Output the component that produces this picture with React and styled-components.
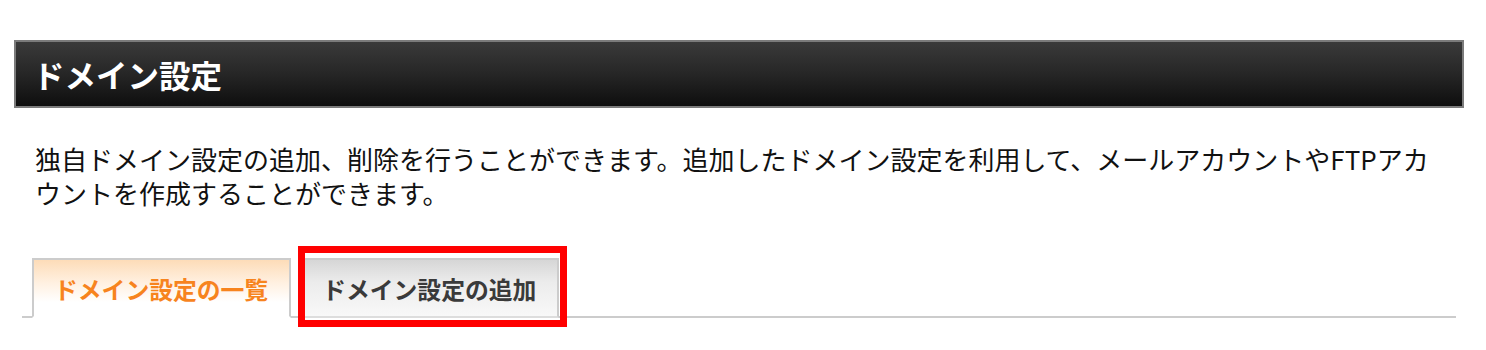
import React from 'react';
import styled, { createGlobalStyle } from 'styled-components';

const GlobalStyle = createGlobalStyle`
  body {
    margin: 0;
    background: #fff;
    font-family: "Noto Sans CJK JP", "Noto Sans", sans-serif;
  }
`;

const Page = styled.div`
  width: 1450px;
  padding: 40px 0 30px 14px;
`;

const Header = styled.h1`
  margin: 0;
  height: 64px;
  display: flex;
  align-items: center;
  padding-left: 17px;
  border: 2px solid #7b7b7b;
  background: linear-gradient(to bottom, #3a3a3a 0%, #262626 50%, #0e0e0e 100%);
  color: #fff;
  font-size: 31.5px;
  font-weight: 700;
`;

const Description = styled.p`
  margin: 34px 0 0;
  padding: 0 16px 0 21px;
  font-size: 26px;
  line-height: 34px;
  color: #111;
`;

const TabBar = styled.div`
  margin: 48px 8px 0;
  padding-left: 10px;
  display: flex;
  align-items: flex-end;
  gap: 9px;
  border-bottom: 2px solid #ccc;
`;

const Tab = styled.div`
  position: relative;
  height: 56px;
  margin-bottom: -2px;
  display: flex;
  align-items: center;
  padding: 0 21px 0 20px;
  border: 2px solid #ccc;
  border-bottom: ${(p) => (p.$active ? '2px solid #fff' : '2px solid #ddd')};
  background: ${(p) =>
    p.$active
      ? 'linear-gradient(to bottom, #fddcb8 0%, #fff0e0 40%, #ffffff 75%)'
      : 'linear-gradient(to bottom, #d6d6d6 0%, #ececec 40%, #f8f8f8 100%)'};
  color: ${(p) => (p.$active ? '#f7841e' : '#3a3a3a')};
  font-size: 23.8px;
  font-weight: 700;
  white-space: nowrap;
`;

const Highlight = styled.span`
  position: absolute;
  top: -14px;
  left: -4px;
  right: -10px;
  bottom: -11px;
  border: 7px solid #ff0000;
  pointer-events: none;
`;

export default function App() {
  return (
    <>
      <GlobalStyle />
      <Page>
        <Header>ドメイン設定</Header>
        <Description>
          独自ドメイン設定の追加、削除を行うことができます。追加したドメイン設定を利用して、メールアカウントやFTPアカウントを作成することができます。
        </Description>
        <TabBar>
          <Tab $active>ドメイン設定の一覧</Tab>
          <Tab>
            ドメイン設定の追加
            <Highlight />
          </Tab>
        </TabBar>
      </Page>
    </>
  );
}
